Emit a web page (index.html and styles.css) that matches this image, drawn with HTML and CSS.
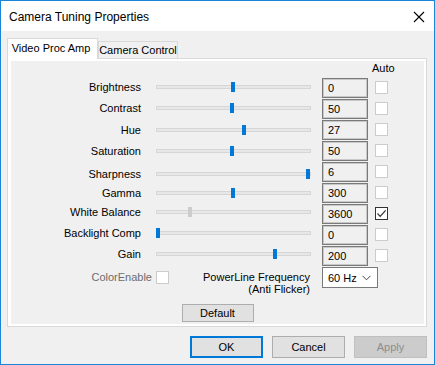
FILE: index.html
```html
<!DOCTYPE html>
<html lang="en">

<head>
  <title>Camera Tuning Properties</title>
  <link rel="stylesheet" href="styles.css">
</head>

<body>
  <div class="window">
    <div class="titlebar">
      <span class="title">Camera Tuning Properties</span>
      <svg class="close" width="12" height="12" viewBox="0 0 12 12">
        <path d="M1 1 L11 11 M11 1 L1 11" stroke="#000" stroke-width="1.1" fill="none"/>
      </svg>
    </div>

    <div class="content">
      <div class="tabs">
        <div class="tab active">Video Proc Amp</div>
        <div class="tab">Camera Control</div>
      </div>

      <div class="panel">
        <div class="page">
          <div class="auto-head">Auto</div>

          <!-- slider rows -->
          <div class="row">
            <span class="label">Brightness</span>
            <div class="slider"><div class="track"></div><div class="thumb" style="--p: 0.497"></div></div>
            <div class="value">0</div>
            <div class="check"></div>
          </div>
          <div class="row">
            <span class="label">Contrast</span>
            <div class="slider"><div class="track"></div><div class="thumb" style="--p: 0.487"></div></div>
            <div class="value">50</div>
            <div class="check"></div>
          </div>
          <div class="row mid">
            <span class="label">Hue</span>
            <div class="slider"><div class="track"></div><div class="thumb" style="--p: 0.57"></div></div>
            <div class="value">27</div>
            <div class="check"></div>
          </div>
          <div class="row mid">
            <span class="label">Saturation</span>
            <div class="slider"><div class="track"></div><div class="thumb" style="--p: 0.487"></div></div>
            <div class="value">50</div>
            <div class="check"></div>
          </div>
          <div class="row low">
            <span class="label">Sharpness</span>
            <div class="slider"><div class="track"></div><div class="thumb" style="--p: 0.993"></div></div>
            <div class="value">6</div>
            <div class="check"></div>
          </div>
          <div class="row mid">
            <span class="label">Gamma</span>
            <div class="slider"><div class="track"></div><div class="thumb" style="--p: 0.497"></div></div>
            <div class="value">300</div>
            <div class="check"></div>
          </div>
          <div class="row lift">
            <span class="label">White Balance</span>
            <div class="slider"><div class="track"></div><div class="thumb off" style="--p: 0.212"></div></div>
            <div class="value">3600</div>
            <div class="check checked">
              <svg width="11" height="11" viewBox="0 0 11 11">
                <path d="M1.5 5.5 L4.2 8.3 L9.6 2.4" stroke="#333" stroke-width="1.2" fill="none"/>
              </svg>
            </div>
          </div>
          <div class="row lift">
            <span class="label">Backlight Comp</span>
            <div class="slider"><div class="track"></div><div class="thumb" style="--p: 0"></div></div>
            <div class="value">0</div>
            <div class="check"></div>
          </div>
          <div class="row lift">
            <span class="label">Gain</span>
            <div class="slider"><div class="track"></div><div class="thumb" style="--p: 0.778"></div></div>
            <div class="value">200</div>
            <div class="check"></div>
          </div>

          <!-- color enable + powerline -->
          <div class="row extra">
            <span class="label grey">ColorEnable</span>
            <div class="check small"></div>
            <div class="powerline">PowerLine Frequency<br>(Anti Flicker)</div>
            <div class="combo">
              <span>60 Hz</span>
              <svg width="9" height="6" viewBox="0 0 9 6">
                <path d="M0.5 0.8 L4.5 4.8 L8.5 0.8" stroke="#444" stroke-width="1" fill="none"/>
              </svg>
            </div>
          </div>

          <button class="btn default-btn">Default</button>
        </div>
      </div>

      <div class="buttons">
        <button class="btn ok">OK</button>
        <button class="btn">Cancel</button>
        <button class="btn disabled">Apply</button>
      </div>
    </div>
  </div>
</body>
</html>
```

FILE: styles.css
```css
body {
  margin: 0;
  font-family: "Liberation Sans", Arial, sans-serif;
  font-size: 11px;
  color: #000;
  background-color: #f0f0f0;
}

.window {
  width: 435px;
  height: 365px;
  box-sizing: border-box;
  border: 1px solid #1a84d8;
  background-color: #f0f0f0;
  display: flex;
  flex-direction: column;
}

.titlebar {
  height: 30px;
  background-color: #fff;
  display: flex;
  align-items: center;
  justify-content: space-between;
  padding: 0 9px 0 8px;
}

.title {
  font-size: 12px;
  padding-top: 1px;
}

.close {
  margin-top: 1px;
}

.content {
  padding: 7px 7px 0 6px;
}

/* tabs */
.tabs {
  display: flex;
  align-items: flex-end;
  height: 20px;
}

.tab {
  box-sizing: border-box;
  border: 1px solid #d9d9d9;
  border-bottom: none;
  height: 17px;
  line-height: 17px;
  padding: 0;
  width: 80px;
  white-space: nowrap;
  background-color: #f0f0f0;
  text-align: center;
}

.tab.active {
  height: 21px;
  width: 91px;
  line-height: 19px;
  background-color: #fff;
  position: relative;
  margin-bottom: -1px;
  padding-right: 3px;
}

.panel {
  border: 1px solid #d9d9d9;
  background-color: #fff;
  padding: 2px 2px 2px 3px;
}

.page {
  height: 263px;
  background-color: #f0f0f0;
  display: flex;
  flex-direction: column;
}

.auto-head {
  height: 17px;
  line-height: 15px;
  padding-left: 361px;
}

.row {
  display: flex;
  height: 21px;
  align-items: flex-start;
}

.label {
  width: 130px;
  text-align: right;
  align-self: center;
  margin-bottom: 3px;
}

.slider {
  position: relative;
  width: 155px;
  height: 10px;
  margin-left: 15px;
  align-self: center;
  margin-bottom: 3px;
}

.row.mid .label,
.row.mid .slider {
  margin-bottom: 1px;
}

.row.low .label,
.row.low .slider {
  margin-bottom: -2px;
}

.row.lift .label,
.row.lift .slider {
  margin-bottom: 6px;
}

.track {
  box-sizing: border-box;
  height: 4px;
  margin-top: 3px;
  background-color: #e7e7e7;
  border: 1px solid #d6d6d6;
}

.thumb {
  position: absolute;
  top: 0;
  left: calc(var(--p) * (100% - 4px));
  width: 4px;
  height: 10px;
  background-color: #0078d7;
}

.thumb.off {
  background-color: #cccccc;
}

.value {
  box-sizing: border-box;
  width: 46px;
  height: 20px;
  margin-left: 11px;
  border: 1px solid #7a7a7a;
  box-shadow: inset 0 0 0 1px #c8c8c8;
  padding-left: 5px;
  line-height: 18px;
  font-size: 11px;
}

.check {
  box-sizing: border-box;
  width: 13px;
  height: 13px;
  margin: 3px 0 0 7px;
  border: 1px solid #cccccc;
  background-color: #fff;
  display: flex;
  align-items: center;
  justify-content: center;
}

.check.checked {
  border-color: #333;
}

.row.extra {
  height: 21px;
}

.grey {
  color: #6d6d6d;
  width: 141px;
  margin-bottom: 0;
  align-self: flex-start;
  line-height: 21px;
}

.check.small {
  margin: 4px 0 0 4px;
}

.powerline {
  width: 141px;
  text-align: right;
  line-height: 12px;
  margin-top: 4px;
}

.combo {
  box-sizing: border-box;
  width: 56px;
  height: 21px;
  margin-left: 12px;
  border: 1px solid #7a7a7a;
  background-color: #fff;
  display: flex;
  align-items: center;
  justify-content: space-between;
  padding: 0 6px 0 5px;
}

/* buttons */
.btn {
  box-sizing: border-box;
  font-family: "Liberation Sans", Arial, sans-serif;
  font-size: 11px;
  color: #000;
  background-color: #e1e1e1;
  border: 1px solid #adadad;
  padding: 0;
}

.default-btn {
  width: 72px;
  height: 18px;
  margin: 16px auto 0;
}

.buttons {
  display: flex;
  justify-content: flex-end;
  gap: 9px;
  margin-top: 9px;
}

.buttons .btn {
  width: 73px;
  height: 22px;
}

.btn.ok {
  border: 2px solid #0078d7;
}

.btn.disabled {
  background-color: #cccccc;
  border-color: #bfbfbf;
  color: #8d8d8d;
}
```
